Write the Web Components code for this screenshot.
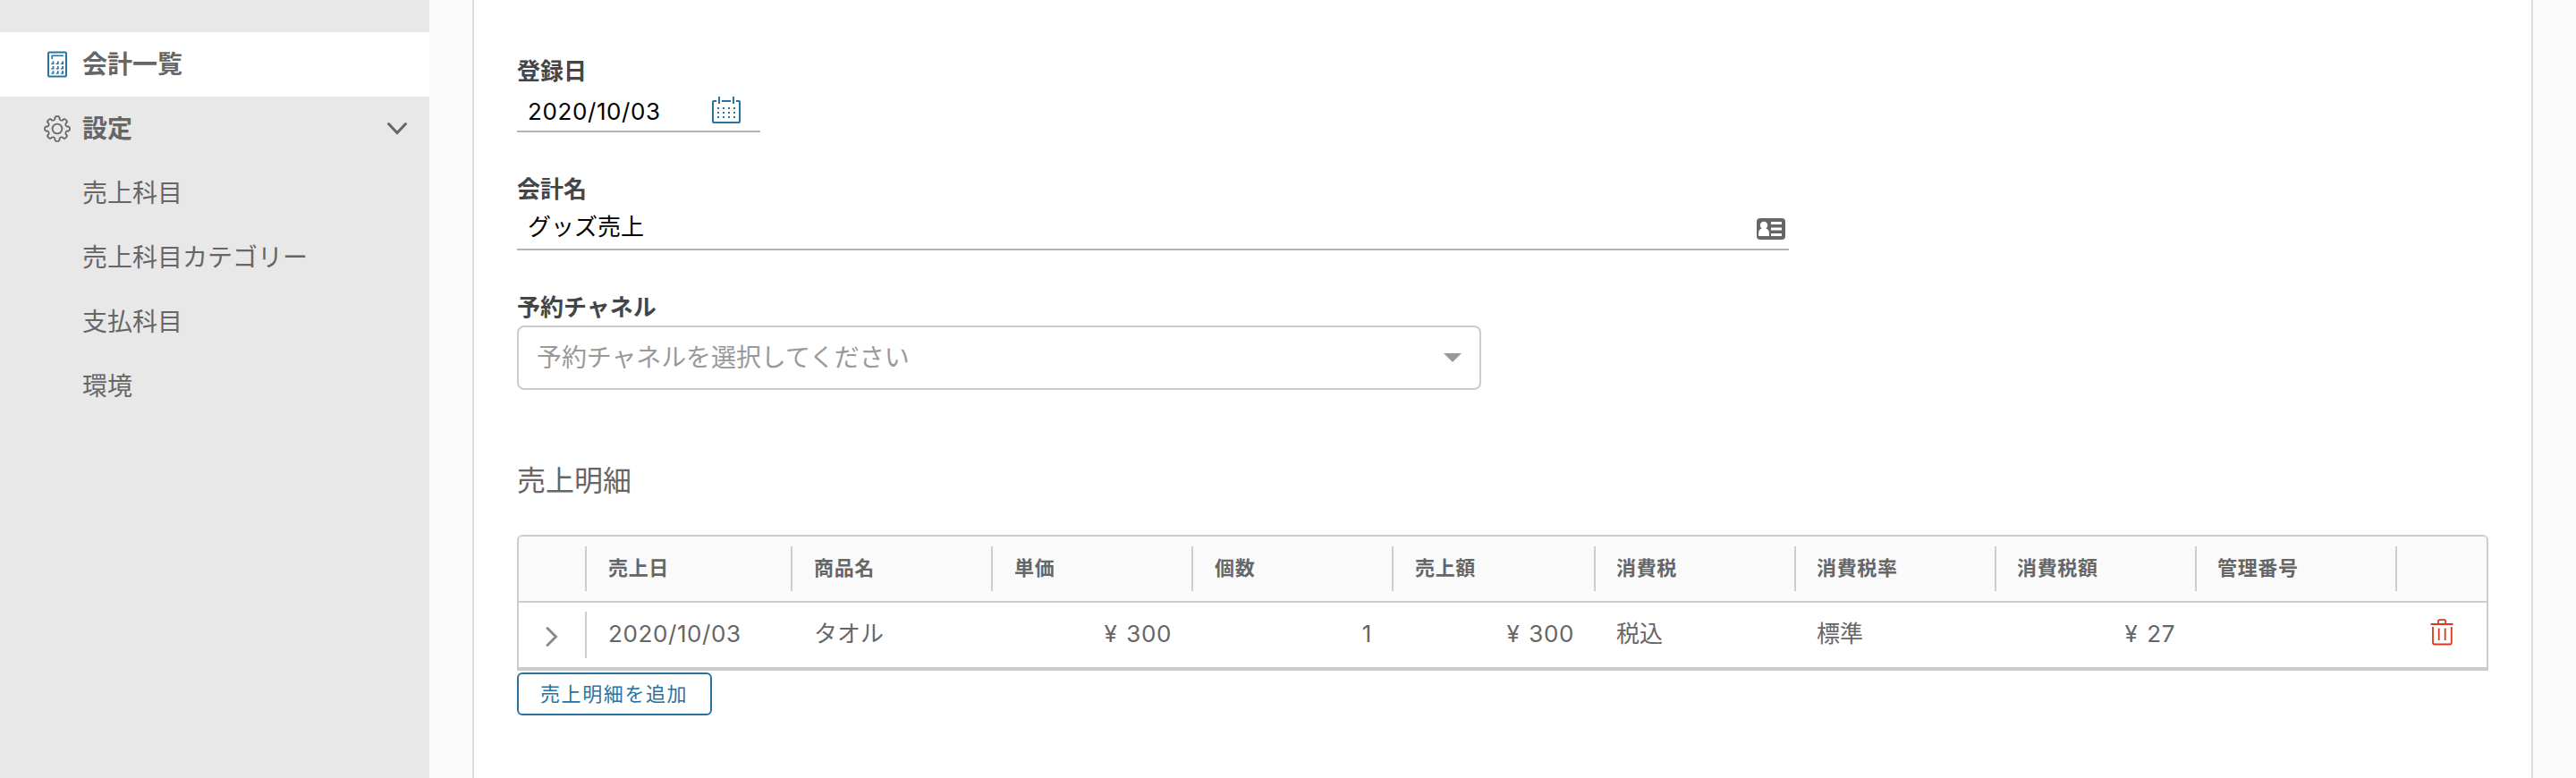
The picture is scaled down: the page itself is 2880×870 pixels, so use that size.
<!DOCTYPE html>
<html lang="ja">
<head>
<meta charset="UTF-8">
<title>会計一覧</title>
<style>
  :root {
    --text-color: #666;
    --label-color: #454545;
    --link-color: #2a72a0;
    --border-color: #ccc;
    --danger-color: #d9391f;
  }
  body {
    margin: 0;
    color: var(--text-color);
    font-family: 'Inter', 'Noto Sans CJK JP', sans-serif;
    font-size: 26px;
  }
</style>
</head>
<body>
<app-shell>
  <side-nav slot="nav">
    <nav-item icon="calculator" strong active>会計一覧</nav-item>
    <nav-item icon="gear" strong expandable>設定</nav-item>
    <nav-item>売上科目</nav-item>
    <nav-item>売上科目カテゴリー</nav-item>
    <nav-item>支払科目</nav-item>
    <nav-item>環境</nav-item>
  </side-nav>

  <form-field class="date" label="登録日" icon="calendar" style="--field-width: 272px">2020/10/03</form-field>
  <form-field class="name" label="会計名" icon="id-card" style="--field-width: 1422px">グッズ売上</form-field>
  <select-field label="予約チャネル">予約チャネルを選択してください</select-field>
  <sales-detail title-text="売上明細"></sales-detail>
  <outline-button>売上明細を追加</outline-button>
</app-shell>

<script>
// eight rounded teeth around (18, 18)
function gearPath() {
  const p = (r, deg) => {
    const a = deg * Math.PI / 180;
    return (18 + r * Math.cos(a)).toFixed(2) + ' ' + (18 + r * Math.sin(a)).toFixed(2);
  };
  let d = 'M' + p(10.3, -22.5);
  for (let i = 0; i < 8; i++) {
    const c = i * 45;
    d += `Q${p(10.4, c - 15)} ${p(11.6, c - 12)}Q${p(13.9, c - 11.5)} ${p(13.9, c - 5)}L${p(13.9, c + 5)}`;
    d += `Q${p(13.9, c + 11.5)} ${p(11.6, c + 12)}Q${p(10.4, c + 15)} ${p(10.3, c + 22.5)}`;
  }
  return d + 'Z';
}

function calculatorKeys() {
  let d = '';
  for (const y of [14.5, 20, 25.2]) {
    for (const x of [11.2, 16.5, 21.8]) {
      d += `M${x} ${y + 2.2}h1.4v-2.2h1.8v3.6h-3.2z`;
    }
  }
  return d;
}

function calendarDots() {
  let d = '';
  for (const y of [12, 17, 22]) {
    for (const x of [6, 12, 18, 24]) {
      d += `M${x} ${y}h2v2h-2z`;
    }
  }
  return d;
}

const ICONS = {
  calculator: {
    width: 36, height: 36,
    body: `<rect x="8" y="4.5" width="20" height="27" rx="1.2" fill="none" stroke="currentColor" stroke-width="2"/>
      <path d="M12.2 12V8.2H25" fill="none" stroke="currentColor" stroke-width="1.6"/>
      <path d="${calculatorKeys()}" fill="currentColor"/>`
  },
  gear: {
    width: 36, height: 36,
    body: `<path d="${gearPath()}" fill="none" stroke="currentColor" stroke-width="1.8" stroke-linejoin="round"/>
      <circle cx="18" cy="18" r="5.4" fill="none" stroke="currentColor" stroke-width="1.8"/>`
  },
  'chevron-down': {
    width: 24, height: 16,
    body: '<path d="M2.5 2.5L12 12.5L21.5 2.5" fill="none" stroke="currentColor" stroke-width="3" stroke-linecap="round"/>'
  },
  'chevron-right': {
    width: 16, height: 24,
    body: '<path d="M3 2.5L12.5 12L3 21.5" fill="none" stroke="currentColor" stroke-width="3" stroke-linecap="round"/>'
  },
  calendar: {
    width: 32, height: 30,
    body: `<path d="M5 5H2Q1 5 1 6V28Q1 29 2 29H30Q31 29 31 28V6Q31 5 30 5H27M11 5H21M8 0V8M24 0V8" fill="none" stroke="currentColor" stroke-width="2"/>
      <path d="${calendarDots()}" fill="currentColor"/>`
  },
  'id-card': {
    width: 32, height: 24,
    body: `<rect width="32" height="24" rx="4" fill="currentColor"/>
      <circle cx="8" cy="8" r="4.2" fill="#fff"/>
      <path d="M2 20v-2.5Q2 12.5 5.5 11.5h5Q14 12.5 14 17.5V20z" fill="#fff"/>
      <path d="M16 4h12v3H16zM16 10.5h12v3H16zM16 17h12v3H16z" fill="#fff"/>`
  },
  trash: {
    width: 26, height: 30,
    body: `<path d="M.5 6H25.5M9 5V3Q9 1.2 10.6 1.2H15.6Q17.2 1.2 17.2 3V5M3 9V26.5Q3 28.5 5 28.5H21.8Q23.8 28.5 23.8 26.5V9" fill="none" stroke="currentColor" stroke-width="1.8"/>
      <path d="M9.7 10.5V24M16.7 10.5V24" fill="none" stroke="currentColor" stroke-width="1.8"/>`
  }
};

function icon(name) {
  const { width, height, body } = ICONS[name];
  return `<svg class="icon" width="${width}" height="${height}" viewBox="0 0 ${width} ${height}">${body}</svg>`;
}

class AppShell extends HTMLElement {
  constructor() {
    super();
    this.attachShadow({ mode: 'open' });
    this.shadowRoot.innerHTML = `
      <style>
        :host {
          display: grid;
          grid-template-columns: 480px 1fr;
          height: 870px;
          overflow: hidden;
          background-color: #fafafa;
        }
        main {
          display: flex;
          flex-direction: column;
          align-items: flex-start;
          box-sizing: border-box;
          margin: 0 48px;
          padding: 62px 48px 0;
          background-color: white;
          border: solid #ddd;
          border-width: 0 2px;
        }
      </style>
      <slot name="nav"></slot>
      <main><slot></slot></main>
    `;
  }
}

class SideNav extends HTMLElement {
  constructor() {
    super();
    this.attachShadow({ mode: 'open' });
    this.shadowRoot.innerHTML = `
      <style>
        :host {
          display: flex;
          flex-direction: column;
          padding-top: 36px;
          background-color: #e8e8e8;
        }
      </style>
      <slot></slot>
    `;
  }
}

class NavItem extends HTMLElement {
  constructor() {
    super();
    this.attachShadow({ mode: 'open' });
  }

  connectedCallback() {
    const name = this.getAttribute('icon');
    this.shadowRoot.innerHTML = `
      <style>
        :host {
          display: flex;
          align-items: center;
          height: 72px;
          padding: 0 24px 0 46px;
          font-size: 28px;
          box-sizing: border-box;
        }
        :host([strong]) {
          font-weight: 700;
        }
        :host([active]) {
          background-color: white;
        }
        :host([active]) .lead {
          color: var(--link-color);
        }
        .lead {
          width: 46px;
          height: 36px;
        }
        .label {
          flex-grow: 1;
          line-height: 72px;
        }
        .icon {
          display: block;
        }
      </style>
      <span class="lead">${name ? icon(name) : ''}</span>
      <span class="label"><slot></slot></span>
      ${this.hasAttribute('expandable') ? icon('chevron-down') : ''}
    `;
  }
}

class FormField extends HTMLElement {
  constructor() {
    super();
    this.attachShadow({ mode: 'open' });
  }

  connectedCallback() {
    this.shadowRoot.innerHTML = `
      <style>
        :host {
          display: block;
          width: var(--field-width);
          margin-bottom: 46px;
        }
        .label {
          line-height: 36px;
          font-weight: 700;
          color: var(--label-color);
        }
        .input {
          display: flex;
          align-items: center;
          justify-content: space-between;
          height: 48px;
          padding: 0 4px 0 12px;
          border-bottom: 2px solid #b3b3b3;
          color: black;
        }
        .value {
          line-height: 40px;
        }
        .icon {
          margin-top: 4px;
          color: #666;
        }
        :host(.date) .input {
          padding-right: 22px;
        }
        :host(.date) .value {
          padding-top: 6px;
          letter-spacing: 0.6px;
        }
        :host(.date) .icon {
          margin-top: 2px;
          color: var(--link-color);
        }
      </style>
      <div class="label">${this.getAttribute('label')}</div>
      <div class="input">
        <span class="value"><slot></slot></span>
        ${icon(this.getAttribute('icon'))}
      </div>
    `;
  }
}

class SelectField extends HTMLElement {
  constructor() {
    super();
    this.attachShadow({ mode: 'open' });
  }

  connectedCallback() {
    this.shadowRoot.innerHTML = `
      <style>
        :host {
          display: block;
          width: 1078px;
          margin-bottom: 78px;
        }
        .label {
          margin-bottom: 2px;
          line-height: 36px;
          font-weight: 700;
          color: var(--label-color);
        }
        .select {
          display: flex;
          align-items: center;
          justify-content: space-between;
          box-sizing: border-box;
          height: 72px;
          padding: 0 20px;
          border: 2px solid var(--border-color);
          border-radius: 8px;
          font-size: 28px;
          line-height: 66px;
          letter-spacing: -0.1px;
          color: #999;
        }
        .arrow {
          border: 10px solid transparent;
          border-top-color: #999;
          border-bottom: 0;
        }
      </style>
      <div class="label">${this.getAttribute('label')}</div>
      <div class="select">
        <slot></slot>
        <span class="arrow"></span>
      </div>
    `;
  }
}

class SalesDetail extends HTMLElement {
  static columns = ['売上日', '商品名', '単価', '個数', '売上額', '消費税', '消費税率', '消費税額', '管理番号'];

  static rows = [
    ['2020/10/03', 'タオル', '¥ 300', '1', '¥ 300', '税込', '標準', '¥ 27', '']
  ];

  // 単価, 個数, 売上額, 消費税額
  static numeric = [2, 3, 4, 7];

  constructor() {
    super();
    this.attachShadow({ mode: 'open' });
  }

  #cell(value, i) {
    const type = SalesDetail.numeric.includes(i) ? ' number' : i === 0 ? ' date' : '';
    return `<div class="cell${type}">${value}</div>`;
  }

  connectedCallback() {
    const { columns, rows } = SalesDetail;
    this.shadowRoot.innerHTML = `
      <style>
        :host {
          display: block;
          width: 2204px;
          margin-bottom: 2px;
        }
        h2 {
          margin: 0 0 36px;
          font-size: 32px;
          font-weight: 400;
          line-height: 48px;
        }
        .table {
          border: 2px solid var(--border-color);
          border-radius: 6px 6px 0 0;
          overflow: hidden;
        }
        .row {
          display: grid;
          grid-template-columns: 76px 230px 224px 224px 224px 226px repeat(4, 224px) 1fr;
          height: 72px;
          align-items: center;
          border-bottom: 2px solid var(--border-color);
        }
        .head {
          background-color: #fafafa;
          font-size: 22px;
          font-weight: 700;
          letter-spacing: 0.66px;
        }
        .cell {
          padding: 0 24px;
          white-space: nowrap;
          box-sizing: border-box;
        }
        .cell:nth-child(n+7) {
          padding-left: 23px;
        }
        .head .cell {
          height: 50px;
          line-height: 48px;
          border-right: 2px solid var(--border-color);
        }
        .head .cell:last-child {
          border-right: 0;
        }
        .body .cell {
          height: 52px;
          line-height: 50px;
        }
        .body .toggle {
          display: flex;
          align-items: center;
          padding: 4px 0 0 29px;
          border-right: 2px solid var(--border-color);
          color: #8c8c8c;
        }
        .date {
          letter-spacing: 0.6px;
        }
        .number {
          text-align: right;
          letter-spacing: 0.6px;
          word-spacing: 2px;
        }
        .body .delete {
          display: flex;
          align-items: center;
          padding: 0 0 7px 37px;
          color: var(--danger-color);
        }
      </style>
      <h2>${this.getAttribute('title-text')}</h2>
      <div class="table">
        <div class="row head">
          <div class="cell"></div>
          ${columns.map(name => `<div class="cell">${name}</div>`).join('')}
          <div class="cell"></div>
        </div>
        ${rows.map(row => `
          <div class="row body">
            <div class="cell toggle">${icon('chevron-right')}</div>
            ${row.map((value, i) => this.#cell(value, i)).join('')}
            <div class="cell delete">${icon('trash')}</div>
          </div>
        `).join('')}
      </div>
    `;
  }
}

class OutlineButton extends HTMLElement {
  constructor() {
    super();
    this.attachShadow({ mode: 'open' });
    this.shadowRoot.innerHTML = `
      <style>
        :host {
          display: block;
        }
        button {
          display: block;
          box-sizing: border-box;
          width: 218px;
          height: 48px;
          padding: 0 0 0 24px;
          border: 2px solid var(--link-color);
          border-radius: 6px;
          background: none;
          color: var(--link-color);
          font-family: inherit;
          font-size: 22px;
          line-height: 42px;
          letter-spacing: 1.6px;
          text-align: left;
        }
      </style>
      <button type="button"><slot></slot></button>
    `;
  }
}

customElements.define('app-shell', AppShell);
customElements.define('side-nav', SideNav);
customElements.define('nav-item', NavItem);
customElements.define('form-field', FormField);
customElements.define('select-field', SelectField);
customElements.define('sales-detail', SalesDetail);
customElements.define('outline-button', OutlineButton);
</script>
</body>
</html>
